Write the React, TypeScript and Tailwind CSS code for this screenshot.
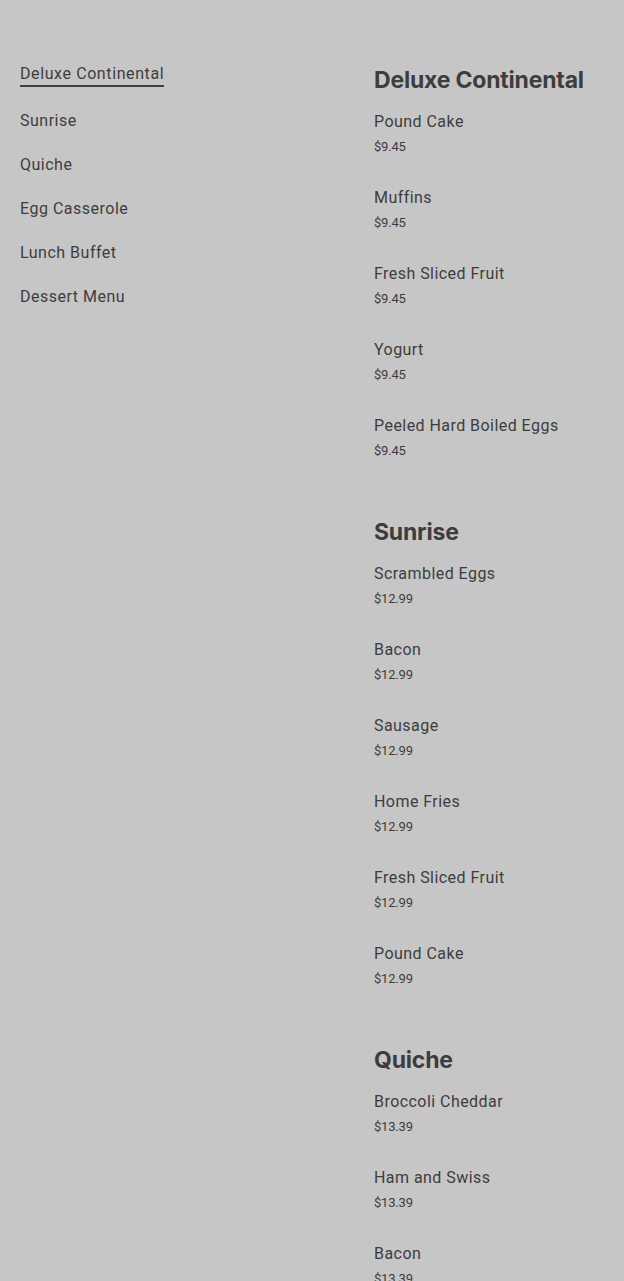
const nav = ["Deluxe Continental", "Sunrise", "Quiche", "Egg Casserole", "Lunch Buffet", "Dessert Menu"];

const sections = [
  {
    title: "Deluxe Continental",
    price: "$9.45",
    items: ["Pound Cake", "Muffins", "Fresh Sliced Fruit", "Yogurt", "Peeled Hard Boiled Eggs"],
  },
  {
    title: "Sunrise",
    price: "$12.99",
    items: ["Scrambled Eggs", "Bacon", "Sausage", "Home Fries", "Fresh Sliced Fruit", "Pound Cake"],
  },
  {
    title: "Quiche",
    price: "$13.39",
    items: ["Broccoli Cheddar", "Ham and Swiss", "Bacon"],
  },
];

export default function App() {
  return (
    <div className="h-[1281px] overflow-hidden bg-[#c6c6c6] text-[#3d3d3d] font-['Roboto',sans-serif]">
      <div className="flex px-5 pt-[62px]">
        {/* Side nav */}
        <nav className="w-[354px] shrink-0 pt-[1px]">
          <ul className="flex flex-col items-start">
            {nav.map((n, i) => (
              <li
                key={n}
                className={
                  i === 0
                    ? "text-base leading-[22px] tracking-[0.6px] border-b-2 border-[#3d3d3d] mb-[22px]"
                    : "text-base leading-6 tracking-[0.5px] mb-5"
                }
              >
                {n}
              </li>
            ))}
          </ul>
        </nav>

        {/* Menu sections */}
        <main className="flex-1 pt-[2px]">
          {sections.map((s) => (
            <section key={s.title} className="flex flex-col pb-[26px]">
              <h2 className="text-[23px] leading-8 font-bold tracking-[-0.2px] font-['Inter',sans-serif] mb-[14px]">
                {s.title}
              </h2>
              {s.items.map((item) => (
                <div key={item} className="mb-[29px]">
                  <div className="text-base leading-6 tracking-[0.45px]">{item}</div>
                  <div className="mt-[3px] text-[13px] leading-5 tracking-[-0.2px]">{s.price}</div>
                </div>
              ))}
            </section>
          ))}
        </main>
      </div>
    </div>
  );
}
